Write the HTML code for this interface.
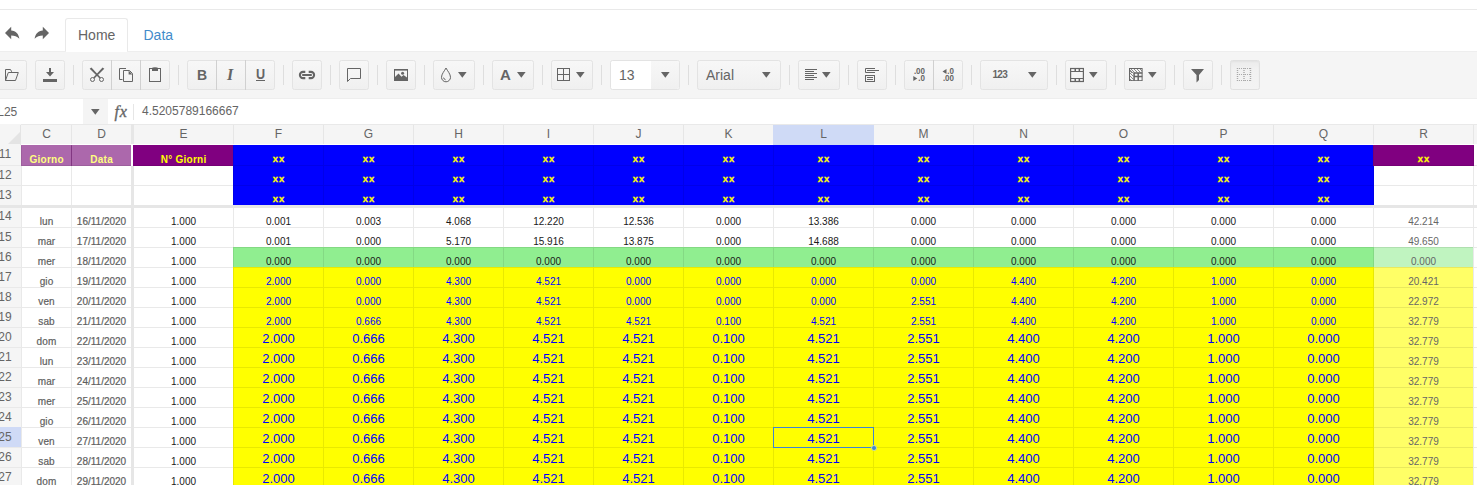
<!DOCTYPE html><html><head><meta charset="utf-8"><title>Spreadsheet</title><style>
*{box-sizing:border-box;margin:0;padding:0}
html,body{width:1477px;height:485px;overflow:hidden;background:#fff}
body{font-family:"Liberation Sans",Arial,sans-serif;color:#656565;position:relative}
.abs{position:absolute}
#root{position:absolute;left:0;top:0;width:1477px;height:485px;overflow:hidden}
.topline{left:0;top:9px;width:1477px;height:1px;background:#e9e9e9}
.tabstrip{left:0;top:10px;width:1477px;height:42px;background:#fff}
.toolbar{left:0;top:52px;width:1477px;height:47px;background:#f5f5f5;border-bottom:1px solid #eeeeee}
.tab{left:65px;top:18px;width:63px;height:34px;border:1px solid #e9e9e9;border-bottom:none;border-radius:3px 3px 0 0;background:#fff}
.tabtxt{top:26px;font-size:14px;line-height:18px;white-space:nowrap}
.btn{position:absolute;top:60px;height:30px;border:1px solid #e3e3e3;border-radius:2.5px;background:linear-gradient(#f7f7f7,#f0f0f0)}
.sep{position:absolute;top:65px;width:1px;height:20px;background:#dedede}
.div{position:absolute;top:60px;width:1px;height:30px;background:#d0d0d0}
.ic{position:absolute;overflow:visible}
.fbar{left:0;top:99px;width:1477px;height:25px;background:#fff}
.namebox{left:0;top:99px;width:83px;height:25px;background:#fff}
.hdr{background:#f5f5f5}
.ch{position:absolute;z-index:3;margin-left:0.5px;top:124px;height:20px;font-size:12px;line-height:20px;text-align:center;color:#656565}
.rh{position:absolute;z-index:3;left:-11px;width:32px;height:20px;font-size:12px;line-height:19px;text-align:center;color:#656565}
.c{position:absolute;height:21px;white-space:nowrap;text-align:center;overflow:hidden}
.c span{position:absolute;left:0;right:0;bottom:1px;display:block;line-height:1}
.vl{position:absolute;width:1px;background:repeating-linear-gradient(to bottom,transparent 0,transparent 1px,rgba(0,0,0,0.085) 1px,rgba(0,0,0,0.085) 20px)}
.hl{position:absolute;height:1px;background:rgba(0,0,0,0.085)}
</style></head><body><div id="root">
<div class="abs topline"></div>
<div class="abs tabstrip"></div>
<div class="abs toolbar"></div>
<div class="abs tab"></div>
<div class="abs tabtxt" style="left:78px;color:#656565">Home</div>
<div class="abs tabtxt" style="left:143.5px;color:#428bca">Data</div>
<svg class="ic" style="left:4px;top:26px" width="16" height="14" viewBox="0 0 16 14"><path d="M7.2 0.8 L1 7 L7.2 13.2 V9.4 C10.5 9.4 13 10.2 15.4 12.8 C14.6 8 12 4.8 7.2 4.6 Z" fill="#656565"/></svg>
<svg class="ic" style="left:34px;top:26px" width="16" height="14" viewBox="0 0 16 14"><path d="M8.8 0.8 L15 7 L8.8 13.2 V9.4 C5.5 9.4 3 10.2 0.6 12.8 C1.4 8 4 4.8 8.8 4.6 Z" fill="#656565"/></svg>
<div class="abs" style="left:0;top:51px;width:1477px;height:1px;background:#eeeeee"></div>
<div class="abs" style="left:66px;top:51px;width:61px;height:1px;background:#fff"></div>
<div class="btn" style="left:-3px;width:30px"></div>
<div class="btn" style="left:35px;width:30px"></div>
<div class="btn" style="left:82px;width:88px"></div>
<div class="btn" style="left:187px;width:88px"></div>
<div class="btn" style="left:292px;width:30px"></div>
<div class="btn" style="left:339px;width:30px"></div>
<div class="btn" style="left:386px;width:30px"></div>
<div class="btn" style="left:433px;width:42px"></div>
<div class="btn" style="left:492px;width:42px"></div>
<div class="btn" style="left:551px;width:42px"></div>
<div class="btn" style="left:697px;width:84px"></div>
<div class="btn" style="left:798px;width:42px"></div>
<div class="btn" style="left:857px;width:30px"></div>
<div class="btn" style="left:904px;width:59px"></div>
<div class="btn" style="left:980px;width:68px"></div>
<div class="btn" style="left:1065px;width:42px"></div>
<div class="btn" style="left:1124px;width:42px"></div>
<div class="btn" style="left:1183px;width:30px"></div>
<div class="btn" style="left:1230px;width:30px;background:linear-gradient(#ebebeb,#f1f1f1 30%,#f3f3f3);border-color:#e0e0e0;box-shadow:inset 0 1px 2px rgba(0,0,0,0.04)"></div>
<div class="btn" style="left:610px;width:70px;background:#fff"></div>
<div class="abs" style="left:651px;top:61px;width:28px;height:28px;background:linear-gradient(#f7f7f7,#f0f0f0);border-radius:0 2px 2px 0"></div>
<div class="sep" style="left:73px"></div>
<div class="sep" style="left:178px"></div>
<div class="sep" style="left:283px"></div>
<div class="sep" style="left:330px"></div>
<div class="sep" style="left:377px"></div>
<div class="sep" style="left:424px"></div>
<div class="sep" style="left:483px"></div>
<div class="sep" style="left:542px"></div>
<div class="sep" style="left:601px"></div>
<div class="sep" style="left:688px"></div>
<div class="sep" style="left:789px"></div>
<div class="sep" style="left:848px"></div>
<div class="sep" style="left:895px"></div>
<div class="sep" style="left:971px"></div>
<div class="sep" style="left:1056px"></div>
<div class="sep" style="left:1115px"></div>
<div class="sep" style="left:1174px"></div>
<div class="sep" style="left:1221px"></div>
<div class="div" style="left:111px"></div>
<div class="div" style="left:140px"></div>
<div class="div" style="left:216px"></div>
<div class="div" style="left:245px"></div>
<div class="div" style="left:933px"></div>
<svg class="ic" style="left:457.7px;top:72.1px" width="8.6" height="5.8" viewBox="0 0 8.6 5.8"><path d="M0 0 H8.6 L4.3 5.8 Z" fill="#656565"/></svg>
<svg class="ic" style="left:516.7px;top:72.1px" width="8.6" height="5.8" viewBox="0 0 8.6 5.8"><path d="M0 0 H8.6 L4.3 5.8 Z" fill="#656565"/></svg>
<svg class="ic" style="left:575.7px;top:72.1px" width="8.6" height="5.8" viewBox="0 0 8.6 5.8"><path d="M0 0 H8.6 L4.3 5.8 Z" fill="#656565"/></svg>
<svg class="ic" style="left:660.7px;top:72.1px" width="8.6" height="5.8" viewBox="0 0 8.6 5.8"><path d="M0 0 H8.6 L4.3 5.8 Z" fill="#656565"/></svg>
<svg class="ic" style="left:761.7px;top:72.1px" width="8.6" height="5.8" viewBox="0 0 8.6 5.8"><path d="M0 0 H8.6 L4.3 5.8 Z" fill="#656565"/></svg>
<svg class="ic" style="left:822.3000000000001px;top:72.1px" width="8.6" height="5.8" viewBox="0 0 8.6 5.8"><path d="M0 0 H8.6 L4.3 5.8 Z" fill="#656565"/></svg>
<svg class="ic" style="left:1027.7px;top:72.1px" width="8.6" height="5.8" viewBox="0 0 8.6 5.8"><path d="M0 0 H8.6 L4.3 5.8 Z" fill="#656565"/></svg>
<svg class="ic" style="left:1089.3px;top:72.1px" width="8.6" height="5.8" viewBox="0 0 8.6 5.8"><path d="M0 0 H8.6 L4.3 5.8 Z" fill="#656565"/></svg>
<svg class="ic" style="left:1148.2px;top:72.1px" width="8.6" height="5.8" viewBox="0 0 8.6 5.8"><path d="M0 0 H8.6 L4.3 5.8 Z" fill="#656565"/></svg>
<div class="abs" style="left:619px;top:66px;font-size:14px;line-height:18px;color:#656565">13</div>
<div class="abs" style="left:706px;top:66px;font-size:14px;line-height:18px;color:#656565">Arial</div>
<div class="abs" style="left:992.5px;top:68.5px;font-size:10px;line-height:12px;color:#656565;font-weight:bold;letter-spacing:-0.7px">123</div>
<div class="abs" style="left:197px;top:65.5px;font-size:14px;line-height:18px;color:#656565;font-weight:bold">B</div>
<div class="abs" style="left:227px;top:66px;font-size:16px;line-height:18px;color:#656565;font-weight:bold;font-style:italic;font-family:'Liberation Serif',serif">I</div>
<div class="abs" style="left:255.5px;top:65px;font-size:14px;line-height:18px;color:#656565;font-weight:bold;transform:scaleX(0.9);transform-origin:0 0">U</div><div class="abs" style="left:256px;top:80px;width:9px;height:1.4px;background:#656565"></div>
<div class="abs" style="left:500px;top:66px;font-size:15px;line-height:18px;color:#656565;font-weight:bold">A</div>
<svg class="ic" style="left:3px;top:67px" width="16" height="16" viewBox="0 0 16 16"><path d="M2.5 13.5 V2.5 H7.5 L8.7 4.8" fill="none" stroke="#656565" stroke-width="1"/><path d="M2.5 13.5 L5.3 5.5 H15.3 L12.5 13.5 Z" fill="none" stroke="#656565" stroke-width="1" stroke-linejoin="miter"/></svg>
<svg class="ic" style="left:42px;top:67px" width="16" height="16" viewBox="0 0 16 16"><path d="M7 1 H9 V5 H12 L8 9.5 L4 5 H7 Z" fill="#656565"/><rect x="1" y="12" width="14" height="3" fill="#656565"/></svg>
<svg class="ic" style="left:89px;top:67px" width="16" height="16" viewBox="0 0 16 16"><path d="M0.7 1.8 L2.4 0.5 L11.7 10.5 L10.6 11.5 Z" fill="#656565"/><path d="M15.3 1.8 L13.6 0.5 L4.3 10.5 L5.4 11.5 Z" fill="#656565"/><circle cx="3.5" cy="12.5" r="2" fill="none" stroke="#656565" stroke-width="1"/><circle cx="12.5" cy="12.5" r="2" fill="none" stroke="#656565" stroke-width="1"/></svg>
<svg class="ic" style="left:118px;top:67px" width="16" height="16" viewBox="0 0 16 16"><path d="M8 1.5 H1.5 V12.5 H4.5" fill="none" stroke="#656565"/><path d="M5.5 3.5 H11.5 L14.5 6.5 V14.5 H5.5 Z" fill="none" stroke="#656565"/><path d="M10.6 3.5 L14.5 7.4 H10.6 Z" fill="#656565"/></svg>
<svg class="ic" style="left:147px;top:66px" width="16" height="17" viewBox="0 0 16 17"><rect x="2.5" y="2.5" width="11" height="13" fill="none" stroke="#656565"/><path d="M5 5 V2.5 H7 A1 1 0 0 1 9 2.5 H11 V5 Z" fill="#656565"/><rect x="5.5" y="1" width="5" height="1.2" fill="#656565" opacity="0.6"/></svg>
<svg class="ic" style="left:299px;top:67px" width="16" height="16" viewBox="0 0 16 16"><path d="M6.3 4.9 H4 A3.1 3.1 0 0 0 4 11.1 H6.3" fill="none" stroke="#656565" stroke-width="2.1"/><path d="M9.7 4.9 H12 A3.1 3.1 0 0 1 12 11.1 H9.7" fill="none" stroke="#656565" stroke-width="2.1"/><rect x="3.2" y="7" width="9.6" height="2" fill="#656565"/></svg>
<svg class="ic" style="left:346px;top:67px" width="16" height="16" viewBox="0 0 16 16"><path d="M1.5 14.5 V1.5 H14.5 V11.5 H4.5 Z" fill="none" stroke="#656565" stroke-linejoin="miter"/></svg>
<svg class="ic" style="left:393px;top:67px" width="16" height="16" viewBox="0 0 16 16"><rect x="1.5" y="2.5" width="13" height="11" fill="none" stroke="#656565"/><rect x="1" y="2" width="14" height="1.6" fill="#656565"/><path d="M2 10 L5.5 6.5 L8.5 9.8 L10.5 8 L14 10.5 V13.5 H2 Z" fill="#656565"/><circle cx="9.6" cy="6.3" r="1.5" fill="#656565"/></svg>
<svg class="ic" style="left:438px;top:67px" width="16" height="16" viewBox="0 0 16 16"><path d="M8 1 C6.5 4 3.5 7 3.5 10.3 A4.5 4.5 0 0 0 12.5 10.3 C12.5 7 9.5 4 8 1 Z" fill="none" stroke="#656565" stroke-width="1"/><path d="M5.6 10.6 A2.6 2.6 0 0 0 7.6 12.8" fill="none" stroke="#656565" stroke-width="1"/></svg>
<svg class="ic" style="left:556px;top:67px" width="16" height="16" viewBox="0 0 16 16"><rect x="1.5" y="1.5" width="12" height="12" fill="none" stroke="#656565"/><path d="M7.5 1.5 V13.5 M1.5 7.5 H13.5" stroke="#656565" fill="none"/></svg>
<svg class="ic" style="left:805px;top:69px" width="12" height="11" viewBox="0 0 12 11"><rect x="0" y="0" width="12" height="1" fill="#656565"/><rect x="0" y="2" width="9" height="1" fill="#656565"/><rect x="0" y="4" width="12" height="1" fill="#656565"/><rect x="0" y="6" width="9" height="1" fill="#656565"/><rect x="0" y="8" width="12" height="1" fill="#656565"/><rect x="0" y="10" width="9" height="1" fill="#656565"/></svg>
<svg class="ic" style="left:865px;top:68px" width="15" height="15" viewBox="0 0 15 15"><path d="M10 0.5 H0.5 V4.5 H10" fill="none" stroke="#656565"/><path d="M2 2.5 H14" stroke="#656565"/><rect x="0.5" y="7.5" width="9" height="6" fill="none" stroke="#656565"/><path d="M2 9.5 H8 M2 11.5 H8" stroke="#656565"/></svg>
<div class="abs" style="left:905px;top:67.5px;width:20px;font-size:8px;line-height:7px;color:#656565;white-space:nowrap;text-align:right;font-weight:bold;transform:scaleY(1.22);transform-origin:50% 100%">.00</div>
<div class="abs" style="left:905px;top:74.5px;width:20px;font-size:8px;line-height:7px;color:#656565;white-space:nowrap;text-align:right;font-weight:bold;transform:scaleY(1.22);transform-origin:50% 100%">.0</div>
<svg class="ic" style="left:913px;top:76px" width="5" height="5" viewBox="0 0 5 5"><path d="M0.3 0 L4.3 2.5 L0.3 5 Z" fill="#656565"/></svg>
<div class="abs" style="left:934px;top:67.5px;width:20px;font-size:8px;line-height:7px;color:#656565;white-space:nowrap;text-align:right;font-weight:bold;transform:scaleY(1.22);transform-origin:50% 100%">.0</div>
<div class="abs" style="left:934px;top:74.5px;width:20px;font-size:8px;line-height:7px;color:#656565;white-space:nowrap;text-align:right;font-weight:bold;transform:scaleY(1.22);transform-origin:50% 100%">.00</div>
<svg class="ic" style="left:942px;top:69px" width="5" height="5" viewBox="0 0 5 5"><path d="M4.5 0 L0.5 2.5 L4.5 5 Z" fill="#656565"/></svg>
<svg class="ic" style="left:1070px;top:68px" width="14" height="14" viewBox="0 0 14 14"><rect x="0.6" y="0.5" width="12.8" height="13" fill="none" stroke="#656565" stroke-width="1.2"/><path d="M0 3.5 H14 M0 10.5 H14" stroke="#656565" stroke-width="1"/><rect x="4.5" y="0.5" width="1.5" height="3" fill="#656565"/><rect x="8.6" y="0.5" width="1.5" height="3" fill="#656565"/><rect x="4.5" y="10.5" width="1.5" height="3" fill="#656565"/><rect x="8.6" y="10.5" width="1.5" height="3" fill="#656565"/></svg>
<svg class="ic" style="left:1129px;top:68px;overflow:hidden" width="14" height="13" viewBox="0 0 14 13"><path d="M-2 0 L3 5" stroke="#656565" stroke-width="0.75"/><path d="M1 0 L6 5" stroke="#656565" stroke-width="0.75"/><path d="M4 0 L9 5" stroke="#656565" stroke-width="0.75"/><path d="M7 0 L12 5" stroke="#656565" stroke-width="0.75"/><path d="M10 0 L15 5" stroke="#656565" stroke-width="0.75"/><path d="M0 1 L5 6" stroke="#656565" stroke-width="0.75"/><path d="M0 4 L5 9" stroke="#656565" stroke-width="0.75"/><path d="M0 7 L5 12" stroke="#656565" stroke-width="0.75"/><path d="M0 10 L5 15" stroke="#656565" stroke-width="0.75"/><rect x="4.5" y="4.5" width="9.5" height="8.5" fill="#f3f3f3"/><rect x="13.1" y="0" width="1" height="13" fill="#f4f4f4"/><rect x="0.5" y="0.5" width="12.6" height="12.2" fill="none" stroke="#656565" stroke-width="1"/><path d="M4.5 4.9 H13.3 M4.5 8.4 H13.3 M5.1 4.5 V12.8 M9.2 4.5 V12.8" stroke="#656565" stroke-width="1.5" fill="none"/></svg>
<svg class="ic" style="left:1190px;top:68px" width="16" height="16" viewBox="0 0 16 16"><path d="M1 1 H14 L9 7 V12 L6.5 14.5 V7 Z" fill="#656565"/></svg>
<svg class="ic" style="left:1237px;top:68px" width="14" height="13" viewBox="0 0 14 13"><path d="M0 0.5 H14 M0 6.5 H14 M0 12.5 H14" stroke="#a9a9a9" stroke-dasharray="1 1" fill="none"/><path d="M0.5 0 V13 M7 0 V13 M13.5 0 V13" stroke="#a9a9a9" stroke-dasharray="1 1" fill="none" stroke-width="1.4"/></svg>
<div class="abs fbar"></div>
<div class="abs" style="left:83px;top:99px;width:25px;height:25px;background:#f4f4f4"></div>
<div class="abs" style="left:-2.8px;top:105px;font-size:12px;line-height:15px;color:#656565">L25</div>
<svg class="ic" style="left:91.4px;top:109.1px" width="8.6" height="5.8" viewBox="0 0 8.6 5.8"><path d="M0 0 H8.6 L4.3 5.8 Z" fill="#656565"/></svg>
<div class="abs" style="left:114.5px;top:102px;font-size:16px;line-height:20px;color:#656565;font-style:italic;-webkit-text-stroke:0.35px #656565;letter-spacing:0.9px;font-family:'Liberation Serif',serif">fx</div>
<div class="abs" style="left:133px;top:104px;width:1px;height:16px;background:#e6e6e6"></div>
<div class="abs" style="left:142px;top:104px;font-size:12px;line-height:15px;color:#656565">4.5205789166667</div>
<div class="abs hdr" style="left:0;top:124px;width:1477px;height:20px;border-top:1px solid #e9e9e9"></div>
<div class="abs hdr" style="left:0;top:124px;width:21px;height:361px"></div>
<div class="abs" style="left:773px;top:125px;width:101px;height:20px;background:#cfdaf6;z-index:2"></div>
<div class="abs" style="left:0;top:427px;width:21px;height:20px;background:#cfdaf6;z-index:2"></div>
<div class="abs" style="left:20px;top:125px;width:1px;height:20px;background:#e4e4e4;z-index:2"></div>
<svg class="ic" style="left:0;top:125px" width="20" height="19" viewBox="0 0 20 19"><path d="M20 7 V19 H8 Z" fill="#e4e4e4"/></svg>
<div class="ch" style="left:21px;width:50px">C</div>
<div class="ch" style="left:71px;width:60px">D</div>
<div class="abs" style="left:71px;top:125px;width:1px;height:19px;background:#e6e6e6"></div>
<div class="ch" style="left:133px;width:100px">E</div>
<div class="ch" style="left:233px;width:90px">F</div>
<div class="abs" style="left:233px;top:125px;width:1px;height:19px;background:#e6e6e6"></div>
<div class="ch" style="left:323px;width:90px">G</div>
<div class="abs" style="left:323px;top:125px;width:1px;height:19px;background:#e6e6e6"></div>
<div class="ch" style="left:413px;width:90px">H</div>
<div class="abs" style="left:413px;top:125px;width:1px;height:19px;background:#e6e6e6"></div>
<div class="ch" style="left:503px;width:90px">I</div>
<div class="abs" style="left:503px;top:125px;width:1px;height:19px;background:#e6e6e6"></div>
<div class="ch" style="left:593px;width:90px">J</div>
<div class="abs" style="left:593px;top:125px;width:1px;height:19px;background:#e6e6e6"></div>
<div class="ch" style="left:683px;width:90px">K</div>
<div class="abs" style="left:683px;top:125px;width:1px;height:19px;background:#e6e6e6"></div>
<div class="ch" style="left:773px;width:100px">L</div>
<div class="abs" style="left:773px;top:125px;width:1px;height:19px;background:#e6e6e6"></div>
<div class="ch" style="left:873px;width:100px">M</div>
<div class="abs" style="left:873px;top:125px;width:1px;height:19px;background:#e6e6e6"></div>
<div class="ch" style="left:973px;width:100px">N</div>
<div class="abs" style="left:973px;top:125px;width:1px;height:19px;background:#e6e6e6"></div>
<div class="ch" style="left:1073px;width:100px">O</div>
<div class="abs" style="left:1073px;top:125px;width:1px;height:19px;background:#e6e6e6"></div>
<div class="ch" style="left:1173px;width:100px">P</div>
<div class="abs" style="left:1173px;top:125px;width:1px;height:19px;background:#e6e6e6"></div>
<div class="ch" style="left:1273px;width:100px">Q</div>
<div class="abs" style="left:1273px;top:125px;width:1px;height:19px;background:#e6e6e6"></div>
<div class="ch" style="left:1373px;width:100px">R</div>
<div class="abs" style="left:1373px;top:125px;width:1px;height:19px;background:#e6e6e6"></div>
<div class="ch" style="left:1473px;width:100px">S</div>
<div class="abs" style="left:1473px;top:125px;width:1px;height:19px;background:#e6e6e6"></div>
<div class="rh" style="top:145px">11</div>
<div class="rh" style="top:166px">12</div>
<div class="abs" style="left:0;top:165px;width:21px;height:1px;background:#e9e9e9"></div>
<div class="rh" style="top:186px">13</div>
<div class="abs" style="left:0;top:185px;width:21px;height:1px;background:#e9e9e9"></div>
<div class="rh" style="top:207px">14</div>
<div class="abs" style="left:0;top:207px;width:21px;height:1px;background:#e9e9e9"></div>
<div class="rh" style="top:228px">15</div>
<div class="abs" style="left:0;top:227px;width:21px;height:1px;background:#e9e9e9"></div>
<div class="rh" style="top:248px">16</div>
<div class="abs" style="left:0;top:247px;width:21px;height:1px;background:#e9e9e9"></div>
<div class="rh" style="top:268px">17</div>
<div class="abs" style="left:0;top:267px;width:21px;height:1px;background:#e9e9e9"></div>
<div class="rh" style="top:288px">18</div>
<div class="abs" style="left:0;top:287px;width:21px;height:1px;background:#e9e9e9"></div>
<div class="rh" style="top:308px">19</div>
<div class="abs" style="left:0;top:307px;width:21px;height:1px;background:#e9e9e9"></div>
<div class="rh" style="top:328px">20</div>
<div class="abs" style="left:0;top:327px;width:21px;height:1px;background:#e9e9e9"></div>
<div class="rh" style="top:348px">21</div>
<div class="abs" style="left:0;top:347px;width:21px;height:1px;background:#e9e9e9"></div>
<div class="rh" style="top:368px">22</div>
<div class="abs" style="left:0;top:367px;width:21px;height:1px;background:#e9e9e9"></div>
<div class="rh" style="top:388px">23</div>
<div class="abs" style="left:0;top:387px;width:21px;height:1px;background:#e9e9e9"></div>
<div class="rh" style="top:408px">24</div>
<div class="abs" style="left:0;top:407px;width:21px;height:1px;background:#e9e9e9"></div>
<div class="rh" style="top:428px">25</div>
<div class="abs" style="left:0;top:427px;width:21px;height:1px;background:#e9e9e9"></div>
<div class="rh" style="top:448px">26</div>
<div class="abs" style="left:0;top:447px;width:21px;height:1px;background:#e9e9e9"></div>
<div class="rh" style="top:468px">27</div>
<div class="abs" style="left:0;top:467px;width:21px;height:1px;background:#e9e9e9"></div>
<div class="abs" style="left:21px;top:145px;width:110px;height:21px;background:#ac68ac"></div>
<div class="abs" style="left:71px;top:145px;width:1px;height:21px;background:#8e3c8e"></div>
<div class="abs" style="left:133px;top:145px;width:101px;height:21px;background:#800080"></div>
<div class="abs" style="left:233px;top:145px;width:1141px;height:61px;background:#0000ff"></div>
<div class="abs" style="left:1373px;top:145px;width:101px;height:21px;background:#800080"></div>
<div class="abs" style="left:233px;top:247px;width:1141px;height:21px;background:#90ee90"></div>
<div class="abs" style="left:1374px;top:247px;width:99px;height:21px;background:#c0f4c0"></div>
<div class="abs" style="left:233px;top:267px;width:1141px;height:218px;background:#ffff00"></div>
<div class="abs" style="left:1374px;top:267px;width:99px;height:218px;background:#ffff66"></div>
<div class="vl" style="left:21px;top:145px;height:60px"></div>
<div class="vl" style="left:21px;top:207px;height:278px"></div>
<div class="vl" style="left:71px;top:145px;height:60px"></div>
<div class="vl" style="left:71px;top:207px;height:278px"></div>
<div class="vl" style="left:233px;top:145px;height:60px"></div>
<div class="vl" style="left:233px;top:207px;height:278px"></div>
<div class="vl" style="left:323px;top:145px;height:60px"></div>
<div class="vl" style="left:323px;top:207px;height:278px"></div>
<div class="vl" style="left:413px;top:145px;height:60px"></div>
<div class="vl" style="left:413px;top:207px;height:278px"></div>
<div class="vl" style="left:503px;top:145px;height:60px"></div>
<div class="vl" style="left:503px;top:207px;height:278px"></div>
<div class="vl" style="left:593px;top:145px;height:60px"></div>
<div class="vl" style="left:593px;top:207px;height:278px"></div>
<div class="vl" style="left:683px;top:145px;height:60px"></div>
<div class="vl" style="left:683px;top:207px;height:278px"></div>
<div class="vl" style="left:773px;top:145px;height:60px"></div>
<div class="vl" style="left:773px;top:207px;height:278px"></div>
<div class="vl" style="left:873px;top:145px;height:60px"></div>
<div class="vl" style="left:873px;top:207px;height:278px"></div>
<div class="vl" style="left:973px;top:145px;height:60px"></div>
<div class="vl" style="left:973px;top:207px;height:278px"></div>
<div class="vl" style="left:1073px;top:145px;height:60px"></div>
<div class="vl" style="left:1073px;top:207px;height:278px"></div>
<div class="vl" style="left:1173px;top:145px;height:60px"></div>
<div class="vl" style="left:1173px;top:207px;height:278px"></div>
<div class="vl" style="left:1273px;top:145px;height:60px"></div>
<div class="vl" style="left:1273px;top:207px;height:278px"></div>
<div class="vl" style="left:1373px;top:145px;height:60px"></div>
<div class="vl" style="left:1373px;top:207px;height:278px"></div>
<div class="vl" style="left:1473px;top:145px;height:60px"></div>
<div class="vl" style="left:1473px;top:207px;height:278px"></div>
<div class="hl" style="left:21px;top:165px;width:1456px"></div>
<div class="hl" style="left:21px;top:185px;width:1456px"></div>
<div class="hl" style="left:21px;top:227px;width:1456px"></div>
<div class="hl" style="left:21px;top:247px;width:1456px"></div>
<div class="hl" style="left:21px;top:267px;width:1456px"></div>
<div class="hl" style="left:21px;top:287px;width:1456px"></div>
<div class="hl" style="left:21px;top:307px;width:1456px"></div>
<div class="hl" style="left:21px;top:327px;width:1456px"></div>
<div class="hl" style="left:21px;top:347px;width:1456px"></div>
<div class="hl" style="left:21px;top:367px;width:1456px"></div>
<div class="hl" style="left:21px;top:387px;width:1456px"></div>
<div class="hl" style="left:21px;top:407px;width:1456px"></div>
<div class="hl" style="left:21px;top:427px;width:1456px"></div>
<div class="hl" style="left:21px;top:447px;width:1456px"></div>
<div class="hl" style="left:21px;top:467px;width:1456px"></div>
<div class="abs" style="left:131px;top:124px;width:3px;height:361px;background:#e6e6e6"></div>
<div class="abs" style="left:133px;top:145px;width:1px;height:21px;background:#800080"></div>
<div class="abs" style="left:131px;top:145px;width:2px;height:21px;background:#fff"></div>
<div class="abs" style="left:0;top:205px;width:1477px;height:3px;background:#e6e6e6"></div>
<div class="abs" style="left:21px;top:144px;width:1456px;height:1px;background:#fff"></div>
<div class="c" style="left:21px;top:145px;width:51px;height:21px;"><span style="font-size:10px;color:#ffff80;font-weight:bold;letter-spacing:0.25px;text-indent:0.25px;">Giorno</span></div>
<div class="c" style="left:71px;top:145px;width:61px;height:21px;"><span style="font-size:10px;color:#ffff80;font-weight:bold;letter-spacing:0.25px;text-indent:0.25px;">Data</span></div>
<div class="c" style="left:133px;top:145px;width:101px;height:21px;"><span style="font-size:10px;color:#ffff00;font-weight:bold;letter-spacing:0.25px;text-indent:0.25px;">N° Giorni</span></div>
<div class="c" style="left:233px;top:145px;width:91px;height:21px;"><span style="font-size:9.4px;color:#ffff00;font-weight:bold;letter-spacing:1.1px;text-indent:1.1px;bottom:2.6px;-webkit-text-stroke:0.3px #ffff00;">xx</span></div>
<div class="c" style="left:323px;top:145px;width:91px;height:21px;"><span style="font-size:9.4px;color:#ffff00;font-weight:bold;letter-spacing:1.1px;text-indent:1.1px;bottom:2.6px;-webkit-text-stroke:0.3px #ffff00;">xx</span></div>
<div class="c" style="left:413px;top:145px;width:91px;height:21px;"><span style="font-size:9.4px;color:#ffff00;font-weight:bold;letter-spacing:1.1px;text-indent:1.1px;bottom:2.6px;-webkit-text-stroke:0.3px #ffff00;">xx</span></div>
<div class="c" style="left:503px;top:145px;width:91px;height:21px;"><span style="font-size:9.4px;color:#ffff00;font-weight:bold;letter-spacing:1.1px;text-indent:1.1px;bottom:2.6px;-webkit-text-stroke:0.3px #ffff00;">xx</span></div>
<div class="c" style="left:593px;top:145px;width:91px;height:21px;"><span style="font-size:9.4px;color:#ffff00;font-weight:bold;letter-spacing:1.1px;text-indent:1.1px;bottom:2.6px;-webkit-text-stroke:0.3px #ffff00;">xx</span></div>
<div class="c" style="left:683px;top:145px;width:91px;height:21px;"><span style="font-size:9.4px;color:#ffff00;font-weight:bold;letter-spacing:1.1px;text-indent:1.1px;bottom:2.6px;-webkit-text-stroke:0.3px #ffff00;">xx</span></div>
<div class="c" style="left:773px;top:145px;width:101px;height:21px;"><span style="font-size:9.4px;color:#ffff00;font-weight:bold;letter-spacing:1.1px;text-indent:1.1px;bottom:2.6px;-webkit-text-stroke:0.3px #ffff00;">xx</span></div>
<div class="c" style="left:873px;top:145px;width:101px;height:21px;"><span style="font-size:9.4px;color:#ffff00;font-weight:bold;letter-spacing:1.1px;text-indent:1.1px;bottom:2.6px;-webkit-text-stroke:0.3px #ffff00;">xx</span></div>
<div class="c" style="left:973px;top:145px;width:101px;height:21px;"><span style="font-size:9.4px;color:#ffff00;font-weight:bold;letter-spacing:1.1px;text-indent:1.1px;bottom:2.6px;-webkit-text-stroke:0.3px #ffff00;">xx</span></div>
<div class="c" style="left:1073px;top:145px;width:101px;height:21px;"><span style="font-size:9.4px;color:#ffff00;font-weight:bold;letter-spacing:1.1px;text-indent:1.1px;bottom:2.6px;-webkit-text-stroke:0.3px #ffff00;">xx</span></div>
<div class="c" style="left:1173px;top:145px;width:101px;height:21px;"><span style="font-size:9.4px;color:#ffff00;font-weight:bold;letter-spacing:1.1px;text-indent:1.1px;bottom:2.6px;-webkit-text-stroke:0.3px #ffff00;">xx</span></div>
<div class="c" style="left:1273px;top:145px;width:101px;height:21px;"><span style="font-size:9.4px;color:#ffff00;font-weight:bold;letter-spacing:1.1px;text-indent:1.1px;bottom:2.6px;-webkit-text-stroke:0.3px #ffff00;">xx</span></div>
<div class="c" style="left:233px;top:165px;width:91px;height:21px;"><span style="font-size:9.4px;color:#ffff00;font-weight:bold;letter-spacing:1.1px;text-indent:1.1px;bottom:2.6px;-webkit-text-stroke:0.3px #ffff00;">xx</span></div>
<div class="c" style="left:323px;top:165px;width:91px;height:21px;"><span style="font-size:9.4px;color:#ffff00;font-weight:bold;letter-spacing:1.1px;text-indent:1.1px;bottom:2.6px;-webkit-text-stroke:0.3px #ffff00;">xx</span></div>
<div class="c" style="left:413px;top:165px;width:91px;height:21px;"><span style="font-size:9.4px;color:#ffff00;font-weight:bold;letter-spacing:1.1px;text-indent:1.1px;bottom:2.6px;-webkit-text-stroke:0.3px #ffff00;">xx</span></div>
<div class="c" style="left:503px;top:165px;width:91px;height:21px;"><span style="font-size:9.4px;color:#ffff00;font-weight:bold;letter-spacing:1.1px;text-indent:1.1px;bottom:2.6px;-webkit-text-stroke:0.3px #ffff00;">xx</span></div>
<div class="c" style="left:593px;top:165px;width:91px;height:21px;"><span style="font-size:9.4px;color:#ffff00;font-weight:bold;letter-spacing:1.1px;text-indent:1.1px;bottom:2.6px;-webkit-text-stroke:0.3px #ffff00;">xx</span></div>
<div class="c" style="left:683px;top:165px;width:91px;height:21px;"><span style="font-size:9.4px;color:#ffff00;font-weight:bold;letter-spacing:1.1px;text-indent:1.1px;bottom:2.6px;-webkit-text-stroke:0.3px #ffff00;">xx</span></div>
<div class="c" style="left:773px;top:165px;width:101px;height:21px;"><span style="font-size:9.4px;color:#ffff00;font-weight:bold;letter-spacing:1.1px;text-indent:1.1px;bottom:2.6px;-webkit-text-stroke:0.3px #ffff00;">xx</span></div>
<div class="c" style="left:873px;top:165px;width:101px;height:21px;"><span style="font-size:9.4px;color:#ffff00;font-weight:bold;letter-spacing:1.1px;text-indent:1.1px;bottom:2.6px;-webkit-text-stroke:0.3px #ffff00;">xx</span></div>
<div class="c" style="left:973px;top:165px;width:101px;height:21px;"><span style="font-size:9.4px;color:#ffff00;font-weight:bold;letter-spacing:1.1px;text-indent:1.1px;bottom:2.6px;-webkit-text-stroke:0.3px #ffff00;">xx</span></div>
<div class="c" style="left:1073px;top:165px;width:101px;height:21px;"><span style="font-size:9.4px;color:#ffff00;font-weight:bold;letter-spacing:1.1px;text-indent:1.1px;bottom:2.6px;-webkit-text-stroke:0.3px #ffff00;">xx</span></div>
<div class="c" style="left:1173px;top:165px;width:101px;height:21px;"><span style="font-size:9.4px;color:#ffff00;font-weight:bold;letter-spacing:1.1px;text-indent:1.1px;bottom:2.6px;-webkit-text-stroke:0.3px #ffff00;">xx</span></div>
<div class="c" style="left:1273px;top:165px;width:101px;height:21px;"><span style="font-size:9.4px;color:#ffff00;font-weight:bold;letter-spacing:1.1px;text-indent:1.1px;bottom:2.6px;-webkit-text-stroke:0.3px #ffff00;">xx</span></div>
<div class="c" style="left:233px;top:185px;width:91px;height:21px;"><span style="font-size:9.4px;color:#ffff00;font-weight:bold;letter-spacing:1.1px;text-indent:1.1px;bottom:2.6px;-webkit-text-stroke:0.3px #ffff00;">xx</span></div>
<div class="c" style="left:323px;top:185px;width:91px;height:21px;"><span style="font-size:9.4px;color:#ffff00;font-weight:bold;letter-spacing:1.1px;text-indent:1.1px;bottom:2.6px;-webkit-text-stroke:0.3px #ffff00;">xx</span></div>
<div class="c" style="left:413px;top:185px;width:91px;height:21px;"><span style="font-size:9.4px;color:#ffff00;font-weight:bold;letter-spacing:1.1px;text-indent:1.1px;bottom:2.6px;-webkit-text-stroke:0.3px #ffff00;">xx</span></div>
<div class="c" style="left:503px;top:185px;width:91px;height:21px;"><span style="font-size:9.4px;color:#ffff00;font-weight:bold;letter-spacing:1.1px;text-indent:1.1px;bottom:2.6px;-webkit-text-stroke:0.3px #ffff00;">xx</span></div>
<div class="c" style="left:593px;top:185px;width:91px;height:21px;"><span style="font-size:9.4px;color:#ffff00;font-weight:bold;letter-spacing:1.1px;text-indent:1.1px;bottom:2.6px;-webkit-text-stroke:0.3px #ffff00;">xx</span></div>
<div class="c" style="left:683px;top:185px;width:91px;height:21px;"><span style="font-size:9.4px;color:#ffff00;font-weight:bold;letter-spacing:1.1px;text-indent:1.1px;bottom:2.6px;-webkit-text-stroke:0.3px #ffff00;">xx</span></div>
<div class="c" style="left:773px;top:185px;width:101px;height:21px;"><span style="font-size:9.4px;color:#ffff00;font-weight:bold;letter-spacing:1.1px;text-indent:1.1px;bottom:2.6px;-webkit-text-stroke:0.3px #ffff00;">xx</span></div>
<div class="c" style="left:873px;top:185px;width:101px;height:21px;"><span style="font-size:9.4px;color:#ffff00;font-weight:bold;letter-spacing:1.1px;text-indent:1.1px;bottom:2.6px;-webkit-text-stroke:0.3px #ffff00;">xx</span></div>
<div class="c" style="left:973px;top:185px;width:101px;height:21px;"><span style="font-size:9.4px;color:#ffff00;font-weight:bold;letter-spacing:1.1px;text-indent:1.1px;bottom:2.6px;-webkit-text-stroke:0.3px #ffff00;">xx</span></div>
<div class="c" style="left:1073px;top:185px;width:101px;height:21px;"><span style="font-size:9.4px;color:#ffff00;font-weight:bold;letter-spacing:1.1px;text-indent:1.1px;bottom:2.6px;-webkit-text-stroke:0.3px #ffff00;">xx</span></div>
<div class="c" style="left:1173px;top:185px;width:101px;height:21px;"><span style="font-size:9.4px;color:#ffff00;font-weight:bold;letter-spacing:1.1px;text-indent:1.1px;bottom:2.6px;-webkit-text-stroke:0.3px #ffff00;">xx</span></div>
<div class="c" style="left:1273px;top:185px;width:101px;height:21px;"><span style="font-size:9.4px;color:#ffff00;font-weight:bold;letter-spacing:1.1px;text-indent:1.1px;bottom:2.6px;-webkit-text-stroke:0.3px #ffff00;">xx</span></div>
<div class="c" style="left:1373px;top:145px;width:101px;height:21px;"><span style="font-size:9.4px;color:#ffff00;font-weight:bold;letter-spacing:1.1px;text-indent:1.1px;bottom:2.6px;-webkit-text-stroke:0.3px #ffff00;">xx</span></div>
<div class="c" style="left:21px;top:207px;width:51px;height:21px;"><span style="font-size:10px;color:#5e5e5e;-webkit-text-stroke:0.2px #5e5e5e;letter-spacing:0.1px;">lun</span></div>
<div class="c" style="left:71px;top:207px;width:61px;height:21px;"><span style="font-size:10px;color:#5e5e5e;-webkit-text-stroke:0.2px #5e5e5e;">16/11/2020</span></div>
<div class="c" style="left:133px;top:207px;width:101px;height:21px;"><span style="font-size:10px;color:#1a1a1a;">1.000</span></div>
<div class="c" style="left:233px;top:207px;width:91px;height:21px;"><span style="font-size:10px;color:#1a1a1a;">0.001</span></div>
<div class="c" style="left:323px;top:207px;width:91px;height:21px;"><span style="font-size:10px;color:#1a1a1a;">0.003</span></div>
<div class="c" style="left:413px;top:207px;width:91px;height:21px;"><span style="font-size:10px;color:#1a1a1a;">4.068</span></div>
<div class="c" style="left:503px;top:207px;width:91px;height:21px;"><span style="font-size:10px;color:#1a1a1a;">12.220</span></div>
<div class="c" style="left:593px;top:207px;width:91px;height:21px;"><span style="font-size:10px;color:#1a1a1a;">12.536</span></div>
<div class="c" style="left:683px;top:207px;width:91px;height:21px;"><span style="font-size:10px;color:#1a1a1a;">0.000</span></div>
<div class="c" style="left:773px;top:207px;width:101px;height:21px;"><span style="font-size:10px;color:#1a1a1a;">13.386</span></div>
<div class="c" style="left:873px;top:207px;width:101px;height:21px;"><span style="font-size:10px;color:#1a1a1a;">0.000</span></div>
<div class="c" style="left:973px;top:207px;width:101px;height:21px;"><span style="font-size:10px;color:#1a1a1a;">0.000</span></div>
<div class="c" style="left:1073px;top:207px;width:101px;height:21px;"><span style="font-size:10px;color:#1a1a1a;">0.000</span></div>
<div class="c" style="left:1173px;top:207px;width:101px;height:21px;"><span style="font-size:10px;color:#1a1a1a;">0.000</span></div>
<div class="c" style="left:1273px;top:207px;width:101px;height:21px;"><span style="font-size:10px;color:#1a1a1a;">0.000</span></div>
<div class="c" style="left:1373px;top:207px;width:101px;height:21px;"><span style="font-size:10px;color:#666;">42.214</span></div>
<div class="c" style="left:21px;top:227px;width:51px;height:21px;"><span style="font-size:10px;color:#5e5e5e;-webkit-text-stroke:0.2px #5e5e5e;letter-spacing:0.1px;">mar</span></div>
<div class="c" style="left:71px;top:227px;width:61px;height:21px;"><span style="font-size:10px;color:#5e5e5e;-webkit-text-stroke:0.2px #5e5e5e;">17/11/2020</span></div>
<div class="c" style="left:133px;top:227px;width:101px;height:21px;"><span style="font-size:10px;color:#1a1a1a;">1.000</span></div>
<div class="c" style="left:233px;top:227px;width:91px;height:21px;"><span style="font-size:10px;color:#1a1a1a;">0.001</span></div>
<div class="c" style="left:323px;top:227px;width:91px;height:21px;"><span style="font-size:10px;color:#1a1a1a;">0.000</span></div>
<div class="c" style="left:413px;top:227px;width:91px;height:21px;"><span style="font-size:10px;color:#1a1a1a;">5.170</span></div>
<div class="c" style="left:503px;top:227px;width:91px;height:21px;"><span style="font-size:10px;color:#1a1a1a;">15.916</span></div>
<div class="c" style="left:593px;top:227px;width:91px;height:21px;"><span style="font-size:10px;color:#1a1a1a;">13.875</span></div>
<div class="c" style="left:683px;top:227px;width:91px;height:21px;"><span style="font-size:10px;color:#1a1a1a;">0.000</span></div>
<div class="c" style="left:773px;top:227px;width:101px;height:21px;"><span style="font-size:10px;color:#1a1a1a;">14.688</span></div>
<div class="c" style="left:873px;top:227px;width:101px;height:21px;"><span style="font-size:10px;color:#1a1a1a;">0.000</span></div>
<div class="c" style="left:973px;top:227px;width:101px;height:21px;"><span style="font-size:10px;color:#1a1a1a;">0.000</span></div>
<div class="c" style="left:1073px;top:227px;width:101px;height:21px;"><span style="font-size:10px;color:#1a1a1a;">0.000</span></div>
<div class="c" style="left:1173px;top:227px;width:101px;height:21px;"><span style="font-size:10px;color:#1a1a1a;">0.000</span></div>
<div class="c" style="left:1273px;top:227px;width:101px;height:21px;"><span style="font-size:10px;color:#1a1a1a;">0.000</span></div>
<div class="c" style="left:1373px;top:227px;width:101px;height:21px;"><span style="font-size:10px;color:#666;">49.650</span></div>
<div class="c" style="left:21px;top:247px;width:51px;height:21px;"><span style="font-size:10px;color:#5e5e5e;-webkit-text-stroke:0.2px #5e5e5e;letter-spacing:0.1px;">mer</span></div>
<div class="c" style="left:71px;top:247px;width:61px;height:21px;"><span style="font-size:10px;color:#5e5e5e;-webkit-text-stroke:0.2px #5e5e5e;">18/11/2020</span></div>
<div class="c" style="left:133px;top:247px;width:101px;height:21px;"><span style="font-size:10px;color:#1a1a1a;">1.000</span></div>
<div class="c" style="left:233px;top:247px;width:91px;height:21px;"><span style="font-size:10px;color:#1a1a1a;">0.000</span></div>
<div class="c" style="left:323px;top:247px;width:91px;height:21px;"><span style="font-size:10px;color:#1a1a1a;">0.000</span></div>
<div class="c" style="left:413px;top:247px;width:91px;height:21px;"><span style="font-size:10px;color:#1a1a1a;">0.000</span></div>
<div class="c" style="left:503px;top:247px;width:91px;height:21px;"><span style="font-size:10px;color:#1a1a1a;">0.000</span></div>
<div class="c" style="left:593px;top:247px;width:91px;height:21px;"><span style="font-size:10px;color:#1a1a1a;">0.000</span></div>
<div class="c" style="left:683px;top:247px;width:91px;height:21px;"><span style="font-size:10px;color:#1a1a1a;">0.000</span></div>
<div class="c" style="left:773px;top:247px;width:101px;height:21px;"><span style="font-size:10px;color:#1a1a1a;">0.000</span></div>
<div class="c" style="left:873px;top:247px;width:101px;height:21px;"><span style="font-size:10px;color:#1a1a1a;">0.000</span></div>
<div class="c" style="left:973px;top:247px;width:101px;height:21px;"><span style="font-size:10px;color:#1a1a1a;">0.000</span></div>
<div class="c" style="left:1073px;top:247px;width:101px;height:21px;"><span style="font-size:10px;color:#1a1a1a;">0.000</span></div>
<div class="c" style="left:1173px;top:247px;width:101px;height:21px;"><span style="font-size:10px;color:#1a1a1a;">0.000</span></div>
<div class="c" style="left:1273px;top:247px;width:101px;height:21px;"><span style="font-size:10px;color:#1a1a1a;">0.000</span></div>
<div class="c" style="left:1373px;top:247px;width:101px;height:21px;"><span style="font-size:10px;color:#666;">0.000</span></div>
<div class="c" style="left:21px;top:267px;width:51px;height:21px;"><span style="font-size:10px;color:#5e5e5e;-webkit-text-stroke:0.2px #5e5e5e;letter-spacing:0.1px;">gio</span></div>
<div class="c" style="left:71px;top:267px;width:61px;height:21px;"><span style="font-size:10px;color:#5e5e5e;-webkit-text-stroke:0.2px #5e5e5e;">19/11/2020</span></div>
<div class="c" style="left:133px;top:267px;width:101px;height:21px;"><span style="font-size:10px;color:#1a1a1a;">1.000</span></div>
<div class="c" style="left:233px;top:267px;width:91px;height:21px;"><span style="font-size:10px;color:#0000ff;">2.000</span></div>
<div class="c" style="left:323px;top:267px;width:91px;height:21px;"><span style="font-size:10px;color:#0000ff;">0.000</span></div>
<div class="c" style="left:413px;top:267px;width:91px;height:21px;"><span style="font-size:10px;color:#0000ff;">4.300</span></div>
<div class="c" style="left:503px;top:267px;width:91px;height:21px;"><span style="font-size:10px;color:#0000ff;">4.521</span></div>
<div class="c" style="left:593px;top:267px;width:91px;height:21px;"><span style="font-size:10px;color:#0000ff;">0.000</span></div>
<div class="c" style="left:683px;top:267px;width:91px;height:21px;"><span style="font-size:10px;color:#0000ff;">0.000</span></div>
<div class="c" style="left:773px;top:267px;width:101px;height:21px;"><span style="font-size:10px;color:#0000ff;">0.000</span></div>
<div class="c" style="left:873px;top:267px;width:101px;height:21px;"><span style="font-size:10px;color:#0000ff;">0.000</span></div>
<div class="c" style="left:973px;top:267px;width:101px;height:21px;"><span style="font-size:10px;color:#0000ff;">4.400</span></div>
<div class="c" style="left:1073px;top:267px;width:101px;height:21px;"><span style="font-size:10px;color:#0000ff;">4.200</span></div>
<div class="c" style="left:1173px;top:267px;width:101px;height:21px;"><span style="font-size:10px;color:#0000ff;">1.000</span></div>
<div class="c" style="left:1273px;top:267px;width:101px;height:21px;"><span style="font-size:10px;color:#0000ff;">0.000</span></div>
<div class="c" style="left:1373px;top:267px;width:101px;height:21px;"><span style="font-size:10px;color:#666;">20.421</span></div>
<div class="c" style="left:21px;top:287px;width:51px;height:21px;"><span style="font-size:10px;color:#5e5e5e;-webkit-text-stroke:0.2px #5e5e5e;letter-spacing:0.1px;">ven</span></div>
<div class="c" style="left:71px;top:287px;width:61px;height:21px;"><span style="font-size:10px;color:#5e5e5e;-webkit-text-stroke:0.2px #5e5e5e;">20/11/2020</span></div>
<div class="c" style="left:133px;top:287px;width:101px;height:21px;"><span style="font-size:10px;color:#1a1a1a;">1.000</span></div>
<div class="c" style="left:233px;top:287px;width:91px;height:21px;"><span style="font-size:10px;color:#0000ff;">2.000</span></div>
<div class="c" style="left:323px;top:287px;width:91px;height:21px;"><span style="font-size:10px;color:#0000ff;">0.000</span></div>
<div class="c" style="left:413px;top:287px;width:91px;height:21px;"><span style="font-size:10px;color:#0000ff;">4.300</span></div>
<div class="c" style="left:503px;top:287px;width:91px;height:21px;"><span style="font-size:10px;color:#0000ff;">4.521</span></div>
<div class="c" style="left:593px;top:287px;width:91px;height:21px;"><span style="font-size:10px;color:#0000ff;">0.000</span></div>
<div class="c" style="left:683px;top:287px;width:91px;height:21px;"><span style="font-size:10px;color:#0000ff;">0.000</span></div>
<div class="c" style="left:773px;top:287px;width:101px;height:21px;"><span style="font-size:10px;color:#0000ff;">0.000</span></div>
<div class="c" style="left:873px;top:287px;width:101px;height:21px;"><span style="font-size:10px;color:#0000ff;">2.551</span></div>
<div class="c" style="left:973px;top:287px;width:101px;height:21px;"><span style="font-size:10px;color:#0000ff;">4.400</span></div>
<div class="c" style="left:1073px;top:287px;width:101px;height:21px;"><span style="font-size:10px;color:#0000ff;">4.200</span></div>
<div class="c" style="left:1173px;top:287px;width:101px;height:21px;"><span style="font-size:10px;color:#0000ff;">1.000</span></div>
<div class="c" style="left:1273px;top:287px;width:101px;height:21px;"><span style="font-size:10px;color:#0000ff;">0.000</span></div>
<div class="c" style="left:1373px;top:287px;width:101px;height:21px;"><span style="font-size:10px;color:#666;">22.972</span></div>
<div class="c" style="left:21px;top:307px;width:51px;height:21px;"><span style="font-size:10px;color:#5e5e5e;-webkit-text-stroke:0.2px #5e5e5e;letter-spacing:0.1px;">sab</span></div>
<div class="c" style="left:71px;top:307px;width:61px;height:21px;"><span style="font-size:10px;color:#5e5e5e;-webkit-text-stroke:0.2px #5e5e5e;">21/11/2020</span></div>
<div class="c" style="left:133px;top:307px;width:101px;height:21px;"><span style="font-size:10px;color:#1a1a1a;">1.000</span></div>
<div class="c" style="left:233px;top:307px;width:91px;height:21px;"><span style="font-size:10px;color:#0000ff;">2.000</span></div>
<div class="c" style="left:323px;top:307px;width:91px;height:21px;"><span style="font-size:10px;color:#0000ff;">0.666</span></div>
<div class="c" style="left:413px;top:307px;width:91px;height:21px;"><span style="font-size:10px;color:#0000ff;">4.300</span></div>
<div class="c" style="left:503px;top:307px;width:91px;height:21px;"><span style="font-size:10px;color:#0000ff;">4.521</span></div>
<div class="c" style="left:593px;top:307px;width:91px;height:21px;"><span style="font-size:10px;color:#0000ff;">4.521</span></div>
<div class="c" style="left:683px;top:307px;width:91px;height:21px;"><span style="font-size:10px;color:#0000ff;">0.100</span></div>
<div class="c" style="left:773px;top:307px;width:101px;height:21px;"><span style="font-size:10px;color:#0000ff;">4.521</span></div>
<div class="c" style="left:873px;top:307px;width:101px;height:21px;"><span style="font-size:10px;color:#0000ff;">2.551</span></div>
<div class="c" style="left:973px;top:307px;width:101px;height:21px;"><span style="font-size:10px;color:#0000ff;">4.400</span></div>
<div class="c" style="left:1073px;top:307px;width:101px;height:21px;"><span style="font-size:10px;color:#0000ff;">4.200</span></div>
<div class="c" style="left:1173px;top:307px;width:101px;height:21px;"><span style="font-size:10px;color:#0000ff;">1.000</span></div>
<div class="c" style="left:1273px;top:307px;width:101px;height:21px;"><span style="font-size:10px;color:#0000ff;">0.000</span></div>
<div class="c" style="left:1373px;top:307px;width:101px;height:21px;"><span style="font-size:10px;color:#666;">32.779</span></div>
<div class="c" style="left:21px;top:327px;width:51px;height:21px;"><span style="font-size:10px;color:#5e5e5e;-webkit-text-stroke:0.2px #5e5e5e;letter-spacing:0.1px;">dom</span></div>
<div class="c" style="left:71px;top:327px;width:61px;height:21px;"><span style="font-size:10px;color:#5e5e5e;-webkit-text-stroke:0.2px #5e5e5e;">22/11/2020</span></div>
<div class="c" style="left:133px;top:327px;width:101px;height:21px;"><span style="font-size:10px;color:#1a1a1a;">1.000</span></div>
<div class="c" style="left:233px;top:327px;width:91px;height:21px;"><span style="font-size:13px;color:#0000ff;bottom:3px;">2.000</span></div>
<div class="c" style="left:323px;top:327px;width:91px;height:21px;"><span style="font-size:13px;color:#0000ff;bottom:3px;">0.666</span></div>
<div class="c" style="left:413px;top:327px;width:91px;height:21px;"><span style="font-size:13px;color:#0000ff;bottom:3px;">4.300</span></div>
<div class="c" style="left:503px;top:327px;width:91px;height:21px;"><span style="font-size:13px;color:#0000ff;bottom:3px;">4.521</span></div>
<div class="c" style="left:593px;top:327px;width:91px;height:21px;"><span style="font-size:13px;color:#0000ff;bottom:3px;">4.521</span></div>
<div class="c" style="left:683px;top:327px;width:91px;height:21px;"><span style="font-size:13px;color:#0000ff;bottom:3px;">0.100</span></div>
<div class="c" style="left:773px;top:327px;width:101px;height:21px;"><span style="font-size:13px;color:#0000ff;bottom:3px;">4.521</span></div>
<div class="c" style="left:873px;top:327px;width:101px;height:21px;"><span style="font-size:13px;color:#0000ff;bottom:3px;">2.551</span></div>
<div class="c" style="left:973px;top:327px;width:101px;height:21px;"><span style="font-size:13px;color:#0000ff;bottom:3px;">4.400</span></div>
<div class="c" style="left:1073px;top:327px;width:101px;height:21px;"><span style="font-size:13px;color:#0000ff;bottom:3px;">4.200</span></div>
<div class="c" style="left:1173px;top:327px;width:101px;height:21px;"><span style="font-size:13px;color:#0000ff;bottom:3px;">1.000</span></div>
<div class="c" style="left:1273px;top:327px;width:101px;height:21px;"><span style="font-size:13px;color:#0000ff;bottom:3px;">0.000</span></div>
<div class="c" style="left:1373px;top:327px;width:101px;height:21px;"><span style="font-size:10px;color:#666;">32.779</span></div>
<div class="c" style="left:21px;top:347px;width:51px;height:21px;"><span style="font-size:10px;color:#5e5e5e;-webkit-text-stroke:0.2px #5e5e5e;letter-spacing:0.1px;">lun</span></div>
<div class="c" style="left:71px;top:347px;width:61px;height:21px;"><span style="font-size:10px;color:#5e5e5e;-webkit-text-stroke:0.2px #5e5e5e;">23/11/2020</span></div>
<div class="c" style="left:133px;top:347px;width:101px;height:21px;"><span style="font-size:10px;color:#1a1a1a;">1.000</span></div>
<div class="c" style="left:233px;top:347px;width:91px;height:21px;"><span style="font-size:13px;color:#0000ff;bottom:3px;">2.000</span></div>
<div class="c" style="left:323px;top:347px;width:91px;height:21px;"><span style="font-size:13px;color:#0000ff;bottom:3px;">0.666</span></div>
<div class="c" style="left:413px;top:347px;width:91px;height:21px;"><span style="font-size:13px;color:#0000ff;bottom:3px;">4.300</span></div>
<div class="c" style="left:503px;top:347px;width:91px;height:21px;"><span style="font-size:13px;color:#0000ff;bottom:3px;">4.521</span></div>
<div class="c" style="left:593px;top:347px;width:91px;height:21px;"><span style="font-size:13px;color:#0000ff;bottom:3px;">4.521</span></div>
<div class="c" style="left:683px;top:347px;width:91px;height:21px;"><span style="font-size:13px;color:#0000ff;bottom:3px;">0.100</span></div>
<div class="c" style="left:773px;top:347px;width:101px;height:21px;"><span style="font-size:13px;color:#0000ff;bottom:3px;">4.521</span></div>
<div class="c" style="left:873px;top:347px;width:101px;height:21px;"><span style="font-size:13px;color:#0000ff;bottom:3px;">2.551</span></div>
<div class="c" style="left:973px;top:347px;width:101px;height:21px;"><span style="font-size:13px;color:#0000ff;bottom:3px;">4.400</span></div>
<div class="c" style="left:1073px;top:347px;width:101px;height:21px;"><span style="font-size:13px;color:#0000ff;bottom:3px;">4.200</span></div>
<div class="c" style="left:1173px;top:347px;width:101px;height:21px;"><span style="font-size:13px;color:#0000ff;bottom:3px;">1.000</span></div>
<div class="c" style="left:1273px;top:347px;width:101px;height:21px;"><span style="font-size:13px;color:#0000ff;bottom:3px;">0.000</span></div>
<div class="c" style="left:1373px;top:347px;width:101px;height:21px;"><span style="font-size:10px;color:#666;">32.779</span></div>
<div class="c" style="left:21px;top:367px;width:51px;height:21px;"><span style="font-size:10px;color:#5e5e5e;-webkit-text-stroke:0.2px #5e5e5e;letter-spacing:0.1px;">mar</span></div>
<div class="c" style="left:71px;top:367px;width:61px;height:21px;"><span style="font-size:10px;color:#5e5e5e;-webkit-text-stroke:0.2px #5e5e5e;">24/11/2020</span></div>
<div class="c" style="left:133px;top:367px;width:101px;height:21px;"><span style="font-size:10px;color:#1a1a1a;">1.000</span></div>
<div class="c" style="left:233px;top:367px;width:91px;height:21px;"><span style="font-size:13px;color:#0000ff;bottom:3px;">2.000</span></div>
<div class="c" style="left:323px;top:367px;width:91px;height:21px;"><span style="font-size:13px;color:#0000ff;bottom:3px;">0.666</span></div>
<div class="c" style="left:413px;top:367px;width:91px;height:21px;"><span style="font-size:13px;color:#0000ff;bottom:3px;">4.300</span></div>
<div class="c" style="left:503px;top:367px;width:91px;height:21px;"><span style="font-size:13px;color:#0000ff;bottom:3px;">4.521</span></div>
<div class="c" style="left:593px;top:367px;width:91px;height:21px;"><span style="font-size:13px;color:#0000ff;bottom:3px;">4.521</span></div>
<div class="c" style="left:683px;top:367px;width:91px;height:21px;"><span style="font-size:13px;color:#0000ff;bottom:3px;">0.100</span></div>
<div class="c" style="left:773px;top:367px;width:101px;height:21px;"><span style="font-size:13px;color:#0000ff;bottom:3px;">4.521</span></div>
<div class="c" style="left:873px;top:367px;width:101px;height:21px;"><span style="font-size:13px;color:#0000ff;bottom:3px;">2.551</span></div>
<div class="c" style="left:973px;top:367px;width:101px;height:21px;"><span style="font-size:13px;color:#0000ff;bottom:3px;">4.400</span></div>
<div class="c" style="left:1073px;top:367px;width:101px;height:21px;"><span style="font-size:13px;color:#0000ff;bottom:3px;">4.200</span></div>
<div class="c" style="left:1173px;top:367px;width:101px;height:21px;"><span style="font-size:13px;color:#0000ff;bottom:3px;">1.000</span></div>
<div class="c" style="left:1273px;top:367px;width:101px;height:21px;"><span style="font-size:13px;color:#0000ff;bottom:3px;">0.000</span></div>
<div class="c" style="left:1373px;top:367px;width:101px;height:21px;"><span style="font-size:10px;color:#666;">32.779</span></div>
<div class="c" style="left:21px;top:387px;width:51px;height:21px;"><span style="font-size:10px;color:#5e5e5e;-webkit-text-stroke:0.2px #5e5e5e;letter-spacing:0.1px;">mer</span></div>
<div class="c" style="left:71px;top:387px;width:61px;height:21px;"><span style="font-size:10px;color:#5e5e5e;-webkit-text-stroke:0.2px #5e5e5e;">25/11/2020</span></div>
<div class="c" style="left:133px;top:387px;width:101px;height:21px;"><span style="font-size:10px;color:#1a1a1a;">1.000</span></div>
<div class="c" style="left:233px;top:387px;width:91px;height:21px;"><span style="font-size:13px;color:#0000ff;bottom:3px;">2.000</span></div>
<div class="c" style="left:323px;top:387px;width:91px;height:21px;"><span style="font-size:13px;color:#0000ff;bottom:3px;">0.666</span></div>
<div class="c" style="left:413px;top:387px;width:91px;height:21px;"><span style="font-size:13px;color:#0000ff;bottom:3px;">4.300</span></div>
<div class="c" style="left:503px;top:387px;width:91px;height:21px;"><span style="font-size:13px;color:#0000ff;bottom:3px;">4.521</span></div>
<div class="c" style="left:593px;top:387px;width:91px;height:21px;"><span style="font-size:13px;color:#0000ff;bottom:3px;">4.521</span></div>
<div class="c" style="left:683px;top:387px;width:91px;height:21px;"><span style="font-size:13px;color:#0000ff;bottom:3px;">0.100</span></div>
<div class="c" style="left:773px;top:387px;width:101px;height:21px;"><span style="font-size:13px;color:#0000ff;bottom:3px;">4.521</span></div>
<div class="c" style="left:873px;top:387px;width:101px;height:21px;"><span style="font-size:13px;color:#0000ff;bottom:3px;">2.551</span></div>
<div class="c" style="left:973px;top:387px;width:101px;height:21px;"><span style="font-size:13px;color:#0000ff;bottom:3px;">4.400</span></div>
<div class="c" style="left:1073px;top:387px;width:101px;height:21px;"><span style="font-size:13px;color:#0000ff;bottom:3px;">4.200</span></div>
<div class="c" style="left:1173px;top:387px;width:101px;height:21px;"><span style="font-size:13px;color:#0000ff;bottom:3px;">1.000</span></div>
<div class="c" style="left:1273px;top:387px;width:101px;height:21px;"><span style="font-size:13px;color:#0000ff;bottom:3px;">0.000</span></div>
<div class="c" style="left:1373px;top:387px;width:101px;height:21px;"><span style="font-size:10px;color:#666;">32.779</span></div>
<div class="c" style="left:21px;top:407px;width:51px;height:21px;"><span style="font-size:10px;color:#5e5e5e;-webkit-text-stroke:0.2px #5e5e5e;letter-spacing:0.1px;">gio</span></div>
<div class="c" style="left:71px;top:407px;width:61px;height:21px;"><span style="font-size:10px;color:#5e5e5e;-webkit-text-stroke:0.2px #5e5e5e;">26/11/2020</span></div>
<div class="c" style="left:133px;top:407px;width:101px;height:21px;"><span style="font-size:10px;color:#1a1a1a;">1.000</span></div>
<div class="c" style="left:233px;top:407px;width:91px;height:21px;"><span style="font-size:13px;color:#0000ff;bottom:3px;">2.000</span></div>
<div class="c" style="left:323px;top:407px;width:91px;height:21px;"><span style="font-size:13px;color:#0000ff;bottom:3px;">0.666</span></div>
<div class="c" style="left:413px;top:407px;width:91px;height:21px;"><span style="font-size:13px;color:#0000ff;bottom:3px;">4.300</span></div>
<div class="c" style="left:503px;top:407px;width:91px;height:21px;"><span style="font-size:13px;color:#0000ff;bottom:3px;">4.521</span></div>
<div class="c" style="left:593px;top:407px;width:91px;height:21px;"><span style="font-size:13px;color:#0000ff;bottom:3px;">4.521</span></div>
<div class="c" style="left:683px;top:407px;width:91px;height:21px;"><span style="font-size:13px;color:#0000ff;bottom:3px;">0.100</span></div>
<div class="c" style="left:773px;top:407px;width:101px;height:21px;"><span style="font-size:13px;color:#0000ff;bottom:3px;">4.521</span></div>
<div class="c" style="left:873px;top:407px;width:101px;height:21px;"><span style="font-size:13px;color:#0000ff;bottom:3px;">2.551</span></div>
<div class="c" style="left:973px;top:407px;width:101px;height:21px;"><span style="font-size:13px;color:#0000ff;bottom:3px;">4.400</span></div>
<div class="c" style="left:1073px;top:407px;width:101px;height:21px;"><span style="font-size:13px;color:#0000ff;bottom:3px;">4.200</span></div>
<div class="c" style="left:1173px;top:407px;width:101px;height:21px;"><span style="font-size:13px;color:#0000ff;bottom:3px;">1.000</span></div>
<div class="c" style="left:1273px;top:407px;width:101px;height:21px;"><span style="font-size:13px;color:#0000ff;bottom:3px;">0.000</span></div>
<div class="c" style="left:1373px;top:407px;width:101px;height:21px;"><span style="font-size:10px;color:#666;">32.779</span></div>
<div class="c" style="left:21px;top:427px;width:51px;height:21px;"><span style="font-size:10px;color:#5e5e5e;-webkit-text-stroke:0.2px #5e5e5e;letter-spacing:0.1px;">ven</span></div>
<div class="c" style="left:71px;top:427px;width:61px;height:21px;"><span style="font-size:10px;color:#5e5e5e;-webkit-text-stroke:0.2px #5e5e5e;">27/11/2020</span></div>
<div class="c" style="left:133px;top:427px;width:101px;height:21px;"><span style="font-size:10px;color:#1a1a1a;">1.000</span></div>
<div class="c" style="left:233px;top:427px;width:91px;height:21px;"><span style="font-size:13px;color:#0000ff;bottom:3px;">2.000</span></div>
<div class="c" style="left:323px;top:427px;width:91px;height:21px;"><span style="font-size:13px;color:#0000ff;bottom:3px;">0.666</span></div>
<div class="c" style="left:413px;top:427px;width:91px;height:21px;"><span style="font-size:13px;color:#0000ff;bottom:3px;">4.300</span></div>
<div class="c" style="left:503px;top:427px;width:91px;height:21px;"><span style="font-size:13px;color:#0000ff;bottom:3px;">4.521</span></div>
<div class="c" style="left:593px;top:427px;width:91px;height:21px;"><span style="font-size:13px;color:#0000ff;bottom:3px;">4.521</span></div>
<div class="c" style="left:683px;top:427px;width:91px;height:21px;"><span style="font-size:13px;color:#0000ff;bottom:3px;">0.100</span></div>
<div class="c" style="left:773px;top:427px;width:101px;height:21px;"><span style="font-size:13px;color:#0000ff;bottom:3px;">4.521</span></div>
<div class="c" style="left:873px;top:427px;width:101px;height:21px;"><span style="font-size:13px;color:#0000ff;bottom:3px;">2.551</span></div>
<div class="c" style="left:973px;top:427px;width:101px;height:21px;"><span style="font-size:13px;color:#0000ff;bottom:3px;">4.400</span></div>
<div class="c" style="left:1073px;top:427px;width:101px;height:21px;"><span style="font-size:13px;color:#0000ff;bottom:3px;">4.200</span></div>
<div class="c" style="left:1173px;top:427px;width:101px;height:21px;"><span style="font-size:13px;color:#0000ff;bottom:3px;">1.000</span></div>
<div class="c" style="left:1273px;top:427px;width:101px;height:21px;"><span style="font-size:13px;color:#0000ff;bottom:3px;">0.000</span></div>
<div class="c" style="left:1373px;top:427px;width:101px;height:21px;"><span style="font-size:10px;color:#666;">32.779</span></div>
<div class="c" style="left:21px;top:447px;width:51px;height:21px;"><span style="font-size:10px;color:#5e5e5e;-webkit-text-stroke:0.2px #5e5e5e;letter-spacing:0.1px;">sab</span></div>
<div class="c" style="left:71px;top:447px;width:61px;height:21px;"><span style="font-size:10px;color:#5e5e5e;-webkit-text-stroke:0.2px #5e5e5e;">28/11/2020</span></div>
<div class="c" style="left:133px;top:447px;width:101px;height:21px;"><span style="font-size:10px;color:#1a1a1a;">1.000</span></div>
<div class="c" style="left:233px;top:447px;width:91px;height:21px;"><span style="font-size:13px;color:#0000ff;bottom:3px;">2.000</span></div>
<div class="c" style="left:323px;top:447px;width:91px;height:21px;"><span style="font-size:13px;color:#0000ff;bottom:3px;">0.666</span></div>
<div class="c" style="left:413px;top:447px;width:91px;height:21px;"><span style="font-size:13px;color:#0000ff;bottom:3px;">4.300</span></div>
<div class="c" style="left:503px;top:447px;width:91px;height:21px;"><span style="font-size:13px;color:#0000ff;bottom:3px;">4.521</span></div>
<div class="c" style="left:593px;top:447px;width:91px;height:21px;"><span style="font-size:13px;color:#0000ff;bottom:3px;">4.521</span></div>
<div class="c" style="left:683px;top:447px;width:91px;height:21px;"><span style="font-size:13px;color:#0000ff;bottom:3px;">0.100</span></div>
<div class="c" style="left:773px;top:447px;width:101px;height:21px;"><span style="font-size:13px;color:#0000ff;bottom:3px;">4.521</span></div>
<div class="c" style="left:873px;top:447px;width:101px;height:21px;"><span style="font-size:13px;color:#0000ff;bottom:3px;">2.551</span></div>
<div class="c" style="left:973px;top:447px;width:101px;height:21px;"><span style="font-size:13px;color:#0000ff;bottom:3px;">4.400</span></div>
<div class="c" style="left:1073px;top:447px;width:101px;height:21px;"><span style="font-size:13px;color:#0000ff;bottom:3px;">4.200</span></div>
<div class="c" style="left:1173px;top:447px;width:101px;height:21px;"><span style="font-size:13px;color:#0000ff;bottom:3px;">1.000</span></div>
<div class="c" style="left:1273px;top:447px;width:101px;height:21px;"><span style="font-size:13px;color:#0000ff;bottom:3px;">0.000</span></div>
<div class="c" style="left:1373px;top:447px;width:101px;height:21px;"><span style="font-size:10px;color:#666;">32.779</span></div>
<div class="c" style="left:21px;top:467px;width:51px;height:21px;"><span style="font-size:10px;color:#5e5e5e;-webkit-text-stroke:0.2px #5e5e5e;letter-spacing:0.1px;">dom</span></div>
<div class="c" style="left:71px;top:467px;width:61px;height:21px;"><span style="font-size:10px;color:#5e5e5e;-webkit-text-stroke:0.2px #5e5e5e;">29/11/2020</span></div>
<div class="c" style="left:133px;top:467px;width:101px;height:21px;"><span style="font-size:10px;color:#1a1a1a;">1.000</span></div>
<div class="c" style="left:233px;top:467px;width:91px;height:21px;"><span style="font-size:13px;color:#0000ff;bottom:3px;">2.000</span></div>
<div class="c" style="left:323px;top:467px;width:91px;height:21px;"><span style="font-size:13px;color:#0000ff;bottom:3px;">0.666</span></div>
<div class="c" style="left:413px;top:467px;width:91px;height:21px;"><span style="font-size:13px;color:#0000ff;bottom:3px;">4.300</span></div>
<div class="c" style="left:503px;top:467px;width:91px;height:21px;"><span style="font-size:13px;color:#0000ff;bottom:3px;">4.521</span></div>
<div class="c" style="left:593px;top:467px;width:91px;height:21px;"><span style="font-size:13px;color:#0000ff;bottom:3px;">4.521</span></div>
<div class="c" style="left:683px;top:467px;width:91px;height:21px;"><span style="font-size:13px;color:#0000ff;bottom:3px;">0.100</span></div>
<div class="c" style="left:773px;top:467px;width:101px;height:21px;"><span style="font-size:13px;color:#0000ff;bottom:3px;">4.521</span></div>
<div class="c" style="left:873px;top:467px;width:101px;height:21px;"><span style="font-size:13px;color:#0000ff;bottom:3px;">2.551</span></div>
<div class="c" style="left:973px;top:467px;width:101px;height:21px;"><span style="font-size:13px;color:#0000ff;bottom:3px;">4.400</span></div>
<div class="c" style="left:1073px;top:467px;width:101px;height:21px;"><span style="font-size:13px;color:#0000ff;bottom:3px;">4.200</span></div>
<div class="c" style="left:1173px;top:467px;width:101px;height:21px;"><span style="font-size:13px;color:#0000ff;bottom:3px;">1.000</span></div>
<div class="c" style="left:1273px;top:467px;width:101px;height:21px;"><span style="font-size:13px;color:#0000ff;bottom:3px;">0.000</span></div>
<div class="c" style="left:1373px;top:467px;width:101px;height:21px;"><span style="font-size:10px;color:#666;">32.779</span></div>
<div class="abs" style="left:773px;top:427px;width:101px;height:21px;border:1px solid #3f86d2"></div>
<div class="abs" style="left:871px;top:445px;width:6px;height:6px;background:#3f86d2;border:0.5px solid #cfe0a0;border-radius:50%"></div>
</div></body></html>
